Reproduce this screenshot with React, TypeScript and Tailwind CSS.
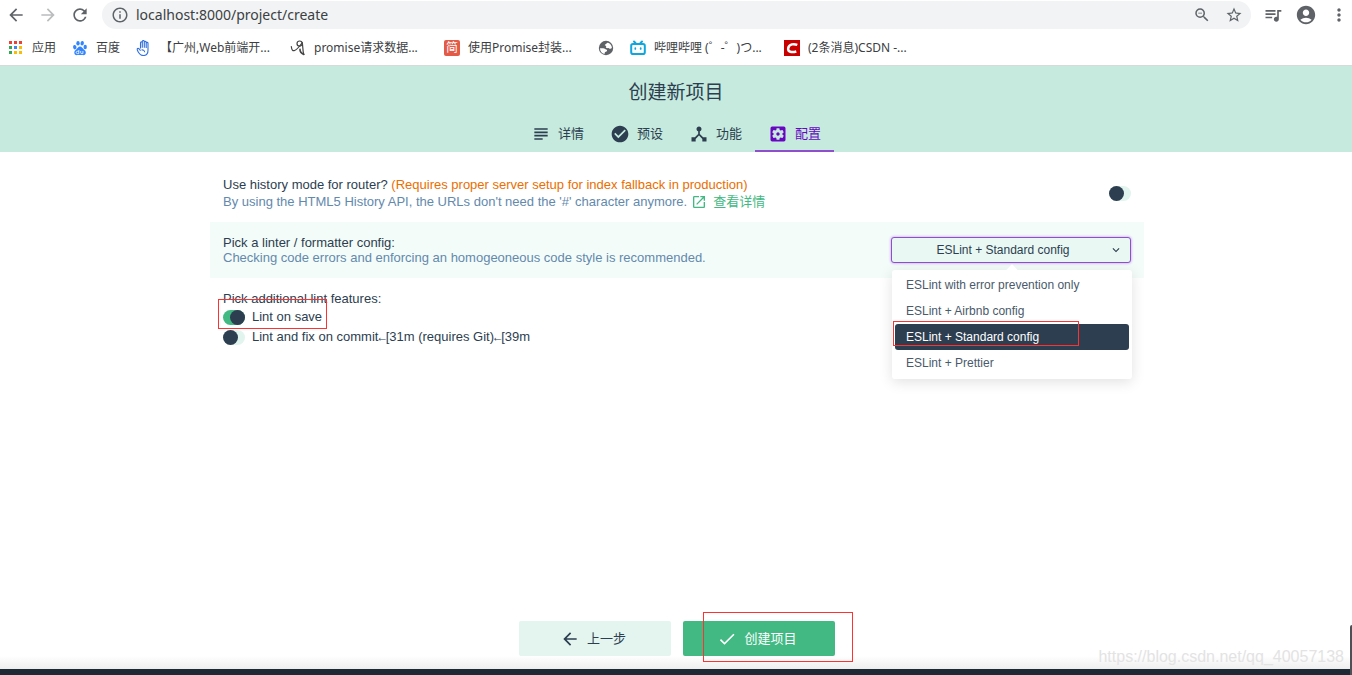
import { useState } from "react";
import type { ReactNode } from "react";
import {
  MdAccountCircle,
  MdArrowBack,
  MdArrowForward,
  MdCheck,
  MdCheckCircle,
  MdDeviceHub,
  MdInfoOutline,
  MdKeyboardArrowDown,
  MdMoreVert,
  MdOpenInNew,
  MdQueueMusic,
  MdRefresh,
  MdSettingsApplications,
  MdStarBorder,
  MdSubject,
  MdZoomOut,
} from "react-icons/md";

const uiFont = "font-['Noto_Sans','Noto_Sans_CJK_SC',sans-serif]";
const pageFont = "font-['Liberation_Sans','Noto_Sans_CJK_SC',sans-serif]";

function AppsIcon() {
  const colors = ["#ea4335", "#ea4335", "#ea4335", "#34a853", "#4285f4", "#fbbc05", "#34a853", "#fbbc05", "#fbbc05"];
  return (
    <svg viewBox="0 0 16 16" className="size-4">
      {colors.map((c, i) => (
        <rect key={i} x={1 + (i % 3) * 5} y={1 + Math.floor(i / 3) * 5} width="3" height="3" fill={c} />
      ))}
    </svg>
  );
}

function PawIcon() {
  return (
    <svg viewBox="0 0 16 16" className="size-4" fill="#3385ff">
      <ellipse cx="2.8" cy="7.2" rx="1.7" ry="2.2" transform="rotate(-12 2.8 7.2)" />
      <ellipse cx="6" cy="3.2" rx="1.7" ry="2.3" />
      <ellipse cx="10.2" cy="3.2" rx="1.7" ry="2.3" transform="rotate(10 10.2 3.2)" />
      <ellipse cx="13.2" cy="7" rx="1.7" ry="2.2" />
      <path d="M8 6.6c1.8 0 2.4 1.5 3.6 2.6 1.2 1 2.4 1.800 2.200 3.700-.2 1.800-1.700 2.400-3.100 2.200-1.800-.3-3.400-.3-5.200 0-1.500.2-3-.4-3.200-2.100-.2-1.800 1.100-2.700 2.200-3.700C5.700 8.200 6.200 6.600 8 6.600z" />
      <path d="M6.800 10v3.600H5.400c-1.700 0-1.700-2.300 0-2.300h1.400M8.700 11v1.800c0 .6.400.8 1 .8h1.200V11" fill="none" stroke="#fff" strokeWidth=".8" />
    </svg>
  );
}

function HandIcon() {
  return (
    <svg viewBox="0 0 16 16" className="size-4" fill="none" stroke="#2f6fe0" strokeWidth="1.100" strokeLinejoin="round">
      <path d="M4.500 8.500V2.800c0-1.300 1.800-1.300 1.800 0V1.500c0-1.300 2-1.300 2 0v.8c0-1.300 1.900-1.300 1.900 0v1c0-1.200 1.800-1.200 1.800 0v7c0 3-1.600 5.200-4.500 5.200-2.800 0-4.200-1.600-5.400-3.800-.7-1.200-1.400-2.600-.5-3.200 1.400-.7 2.200.8 2.900 2.200M6.300 2.500v5.300M8.300 2v5.800M10.200 3v5" />
      <path d="M5.500 10c1.800-.4 3 .7 3.200 2.200" />
    </svg>
  );
}

function DoodleIcon() {
  return (
    <svg viewBox="0 0 16 16" className="size-4" fill="none" stroke="#444" strokeWidth="1.200" strokeLinecap="round">
      <circle cx="9.600" cy="3.600" r="2.600" />
      <path d="M1.300 6.500c.4 3.500 1.500 4.800 3.300 4 2.600-1.200 4.500-3.500 7-7M12.200 2.500c.8 3.500.4 8.500 1.600 12" />
      <path d="M10 9.200c-.2 2.500 1.800 4.300 3.800 5.300" strokeWidth="1.600" />
    </svg>
  );
}

function GlobeIcon() {
  return (
    <svg viewBox="0 0 16 16" className="size-4">
      <circle cx="8" cy="8" r="7.200" fill="#5f6368" />
      <path d="M2 8.300h3.200c1.500 0 2 1.200 3 1.300.9.100 1 .8.700 1.500-.3.800-1.800.5-2.100 1.500l-.3 1.500C3.700 13.400 2 11 2 8.300zM6.800 5.300c.2-1.200 1.400-.8 1.700-1.700.2-.7.900-.9 1.500-.8 2.300.9 3.900 2.900 3.900 5.300l-1.300.7c-1 .3-1.700-.7-2.600-.7-.9.100-1.800.1-2.100-.8-.2-.8.700-.9.300-1.300-.4-.300-1.300-.2-1.400-.7z" fill="#fff" />
    </svg>
  );
}

function TvIcon() {
  return (
    <svg viewBox="0 0 16 16" className="size-4" fill="none" stroke="#10a5dc" strokeWidth="2" strokeLinecap="round">
      <rect x="1.200" y="4" width="13.600" height="10" rx="1.800" />
      <path d="M4 1.500l1.500 1.500M12 1.500l-1.500 1.500" />
      <path d="M5.300 8v1M10.700 8v1" strokeWidth="1.700" />
    </svg>
  );
}

function CsdnIcon() {
  return (
    <svg viewBox="0 0 16 16" className="size-4">
      <rect width="16" height="16" fill="#c90000" />
      <path d="M13.300 4.800C10 3.600 5 3.800 4.200 8.200c-.6 4 3.600 4.500 8.100 3.300" fill="none" stroke="#fff" strokeWidth="2.500" />
    </svg>
  );
}

type Bookmark = { label: string; icon: ReactNode; width: string };

const bookmarks: Bookmark[] = [
  { label: "应用", icon: <AppsIcon />, width: "w-16" },
  { label: "百度", icon: <PawIcon />, width: "w-16" },
  { label: "【广州,Web前端开...", icon: <HandIcon />, width: "w-[154px]" },
  { label: "promise请求数据...", icon: <DoodleIcon />, width: "w-[154px]" },
  {
    label: "使用Promise封装...",
    icon: <span className="flex size-4 items-center justify-center rounded-xs bg-[#e35a47] text-xs text-white">简</span>,
    width: "w-[154px]",
  },
  { label: "", icon: <GlobeIcon />, width: "w-8" },
  { label: "哔哩哔哩 (゜-゜)つ...", icon: <TvIcon />, width: "w-[154px]" },
  { label: "(2条消息)CSDN -...", icon: <CsdnIcon />, width: "w-[154px]" },
];

function BrowserBar() {
  return (
    <div className={`${uiFont} border-b border-[#d5dbd9] bg-white text-[#5f6368]`}>
      <div className="flex items-center gap-3 pt-px pr-[3px] pl-1.5">
        <div className="flex gap-3">
          <button aria-label="Back"><MdArrowBack className="size-5" /></button>
          <button aria-label="Forward" className="text-[#babcbe]"><MdArrowForward className="size-5" /></button>
          <button aria-label="Reload"><MdRefresh className="size-5" /></button>
        </div>
        <div className="flex h-7 flex-1 items-center gap-1.5 rounded-full bg-[#f1f3f4] px-2">
          <MdInfoOutline className="size-5 p-px" />
          <input
            aria-label="Address"
            defaultValue="localhost:8000/project/create"
            className="h-7 min-w-0 flex-1 bg-transparent pb-0.5 text-sm text-[#3c4043] outline-none"
          />
          <button aria-label="Zoom"><MdZoomOut className="size-[18px]" /></button>
          <button aria-label="Bookmark" className="ml-2"><MdStarBorder className="size-[18px]" /></button>
        </div>
        <div className="flex items-center gap-3">
          <button aria-label="Media"><MdQueueMusic className="size-5" /></button>
          <button aria-label="Account"><MdAccountCircle className="size-[22px]" /></button>
          <button aria-label="Menu"><MdMoreVert className="size-5" /></button>
        </div>
      </div>
      <nav className="flex h-9 items-center pt-0.5 pl-2">
        {bookmarks.map((b, i) => (
          <a key={i} href="#" aria-label={b.label || "Bookmark"} className={`${b.width} flex shrink-0 items-center gap-2 text-xs whitespace-nowrap text-[#3c4043]`}>
            <span className="shrink-0">{b.icon}</span>
            {b.label}
          </a>
        ))}
      </nav>
    </div>
  );
}

const tabs = [
  { label: "详情", Icon: MdSubject },
  { label: "预设", Icon: MdCheckCircle },
  { label: "功能", Icon: MdDeviceHub },
  { label: "配置", Icon: MdSettingsApplications },
];

function Header() {
  const [active, setActive] = useState(3);
  return (
    <header className="flex flex-col items-center bg-[#c6ebde]">
      <h1 className="pt-[13px] pb-[7px] text-[19px] leading-7">创建新项目</h1>
      <div role="tablist" className="flex">
        {tabs.map(({ label, Icon }, i) => (
          <button
            key={label}
            role="tab"
            aria-selected={i === active}
            onClick={() => setActive(i)}
            className={`flex h-[38px] w-[79px] items-center justify-center gap-[7px] border-b-2 pt-[3px] ${i === active ? "border-[#8f4fcd] text-[#6806c1]" : "border-transparent"}`}
          >
            <Icon className="size-5" />
            {label}
          </button>
        ))}
      </div>
    </header>
  );
}

function Toggle({ id, on = false }: { id: string; on?: boolean }) {
  return (
    <input
      id={id}
      type="checkbox"
      role="switch"
      defaultChecked={on}
      className="flex h-[15px] w-[22px] shrink-0 appearance-none rounded-full bg-[#e1f4ee] before:size-[15px] before:rounded-full before:bg-[#2c3e50] checked:justify-end checked:bg-[#42b983]"
    />
  );
}

const configs = ["ESLint with error prevention only", "ESLint + Airbnb config", "ESLint + Standard config", "ESLint + Prettier"];

function ConfigSelect() {
  const [value, setValue] = useState(configs[2]);
  return (
    <div className="relative w-60">
      <select
        id="linter"
        value={value}
        onChange={(e) => setValue(e.target.value)}
        className="h-[26px] w-full appearance-none rounded-[3px] border border-[#8f4fcd] bg-[#e9f8f3] pr-4 text-center text-xs shadow-[0_0_3px_#b98ae8] outline-none [text-align-last:center]"
      >
        {configs.map((c) => (
          <option key={c}>{c}</option>
        ))}
      </select>
      <MdKeyboardArrowDown className="pointer-events-none absolute top-1.5 right-2 size-3.5" />
      <div role="listbox" className="absolute top-[33px] left-px z-10 w-60 rounded-[3px] bg-white px-[3px] pt-0.5 pb-[3px] shadow-[0_3px_14px_rgba(0,0,0,0.12)]">
        <span className="absolute -top-1 left-1/2 size-2 -translate-x-1/2 rotate-45 bg-white" />
        {configs.map((c) => (
          <div key={c} className="relative">
            <button
              role="option"
              aria-selected={c === value}
              onClick={() => setValue(c)}
              className={`block h-[26px] w-full rounded-[3px] px-[11px] text-left text-xs ${c === value ? "bg-[#2c3e50] text-white" : "text-[#4a5a6a]"}`}
            >
              {c}
            </button>
            {c === configs[2] && <span className="pointer-events-none absolute -top-[3px] -left-0.5 h-[25px] w-[186px] border border-[#ff3232]" />}
          </div>
        ))}
      </div>
    </div>
  );
}

function Arrow() {
  return <span className="font-['Liberation_Mono',monospace] text-xs">←</span>;
}

function Settings() {
  return (
    <main className="mx-auto w-full max-w-[936px] flex-1 pt-3 pl-0.5">
      <section className="flex h-[58px] items-center justify-between px-[13px]">
        <div className="leading-[17px]">
          <label htmlFor="history" className="block">
            Use history mode for router? <span className="text-[#ea6e00]">(Requires proper server setup for index fallback in production)</span>
          </label>
          <p className="flex items-center text-[#6389ad]">
            By using the HTML5 History API, the URLs don't need the '#' character anymore.
            <a href="#" className="ml-1 flex items-center gap-1.5 text-[#42b983]">
              <MdOpenInNew className="size-4" />
              查看详情
            </a>
          </p>
        </div>
        <Toggle id="history" />
      </section>
      <section className="flex h-14 items-center justify-between bg-[#f4fcf9] px-[13px]">
        <div className="leading-[15px]">
          <label htmlFor="linter" className="block">Pick a linter / formatter config:</label>
          <p className="text-[#6389ad]">Checking code errors and enforcing an homogeoneous code style is recommended.</p>
        </div>
        <ConfigSelect />
      </section>
      <section className="px-[13px] pt-3">
        <h2 className="leading-[17px]">Pick additional lint features:</h2>
        <div className="relative flex h-5 w-fit items-center gap-[7px]">
          <Toggle id="save" on />
          <label htmlFor="save">Lint on save</label>
          <span className="pointer-events-none absolute -inset-x-[5px] -top-2 h-[30px] border border-[#ff3232]" />
        </div>
        <div className="flex h-5 items-center gap-[7px]">
          <Toggle id="commit" />
          <label htmlFor="commit">
            Lint and fix on commit<Arrow />[31m (requires Git)<Arrow />[39m
          </label>
        </div>
      </section>
    </main>
  );
}

export default function App() {
  return (
    <div className={`${pageFont} relative flex min-h-screen flex-col bg-white text-[13px] text-[#2c3e50]`}>
      <BrowserBar />
      <Header />
      <Settings />
      <footer className="relative flex justify-center gap-3 bg-linear-to-t from-[#eeeeee] to-white to-[13px] pb-[13px] pl-0.5">
        <button className="flex h-[35px] w-[152px] items-center justify-center gap-[7px] rounded-xs bg-[#e3f5ee] pr-1">
          <MdArrowBack className="size-5" />
          上一步
        </button>
        <div className="relative">
          <button className="flex h-[35px] w-[152px] items-center justify-center gap-[7px] rounded-xs bg-[#42b983] pr-1 text-white">
            <MdCheck className="size-5" />
            创建项目
          </button>
          <span className="pointer-events-none absolute -top-[9px] left-5 h-[50px] w-[150px] border border-[#ff3232]" />
        </div>
        <span className="absolute right-2 bottom-0.5 text-base leading-5 text-[#e3e3e3]">https://blog.csdn.net/qq_40057138</span>
      </footer>
      <div className="h-1.5 bg-[#1d2935]" />
      <div className="absolute right-0 bottom-0 h-[50px] w-0.5 rounded-tl-xs bg-[#4d5054]" />
    </div>
  );
}
